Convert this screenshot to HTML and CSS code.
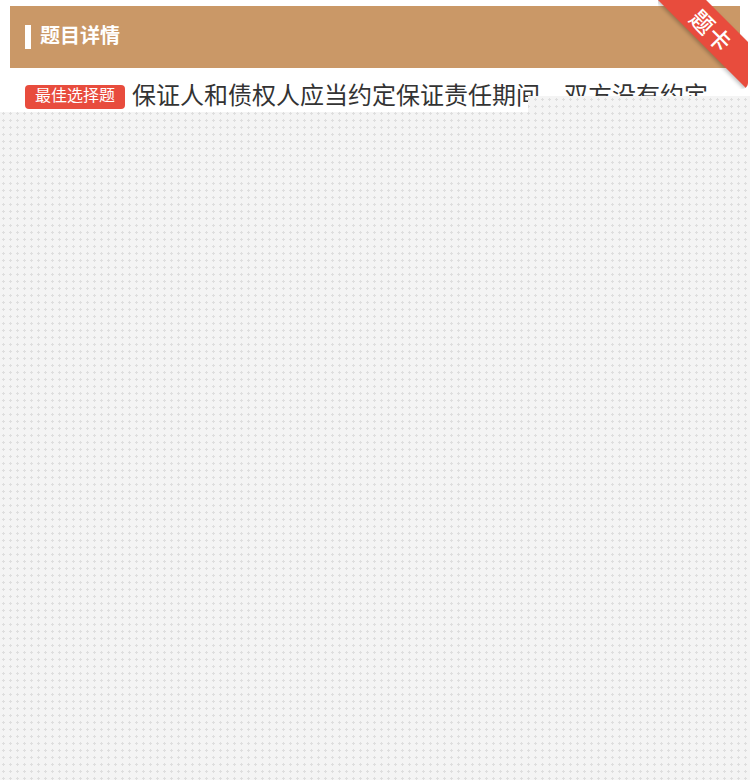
FILE: index.html
```html
<!DOCTYPE html>
<html lang="zh-CN">
<head>
    <meta charset="UTF-8">
    <meta name="viewport" content="width=device-width, initial-scale=1.0">
    <title>题目详情</title>
    <link rel="stylesheet" href="styles.css">
</head>
<body>
    <div class="page">
        <div class="panel">
            <div class="panel-head">
                <span class="bar"></span>
                <h2>题目详情</h2>
            </div>
            <div class="question">
                <span class="tag">最佳选择题</span>保证人和债权人应当约定保证责任期间，双方没有约定的，保证期间为主债务履行期届满之日起
            </div>
        </div>

        <div class="ribbon">
            <span class="ribbon-band">题卡</span>
        </div>

        <div class="mask"></div>
    </div>
</body>
</html>
```

FILE: styles.css
```css
body {
    margin: 0;
    font-family: "Noto Sans CJK SC", "Liberation Sans", sans-serif;
    background-color: #fff;
    color: #333;
}

.page {
    position: relative;
    min-height: 780px;
    overflow: hidden;
}

.panel {
    padding: 6px 10px 0;
}

.panel-head {
    display: flex;
    align-items: center;
    height: 62px;
    padding-left: 15px;
    background-color: #ca9867;
    color: #fff;
}
.bar {
    width: 6px;
    height: 24px;
    margin-right: 9px;
    background-color: #fff;
}
.panel-head h2 {
    margin: 0 0 4px;
    font-size: 20px;
    line-height: 24px;
    font-weight: bold;
}

.question {
    padding: 10px 15px;
    font-size: 24px;
    line-height: 32px;
}
.tag {
    display: inline-block;
    height: 24px;
    line-height: 19px;
    padding: 0 10px;
    margin-right: 7px;
    border-radius: 4px;
    background-color: #e84c3d;
    color: #fff;
    font-size: 16px;
    vertical-align: 3px;
}

/* corner ribbon */
.ribbon {
    position: absolute;
    top: 0;
    right: 2px;
    width: 90px;
    height: 89px;
    overflow: hidden;
    border-bottom-right-radius: 6px;
}
.ribbon-band {
    position: absolute;
    left: -11px;
    top: 13px;
    width: 130px;
    height: 34px;
    line-height: 34px;
    text-align: center;
    background-color: #e84c3d;
    color: #fff;
    font-size: 23px;
    font-weight: 500;
    letter-spacing: 1px;
    transform: rotate(45deg);
    box-shadow: 0 2px 4px rgba(0, 0, 0, 0.25);
}

/* dotted cover over the rest of the page */
.mask {
    position: absolute;
    top: 96px;
    left: 0;
    right: 0;
    bottom: 0;
    background-color: #f4f4f4;
    background-image: radial-gradient(#dedede 1px, transparent 1.3px);
    background-size: 7px 7px;
    clip-path: polygon(0 16px, 528px 16px, 528px 0, 100% 0, 100% 100%, 0 100%);
}
```
